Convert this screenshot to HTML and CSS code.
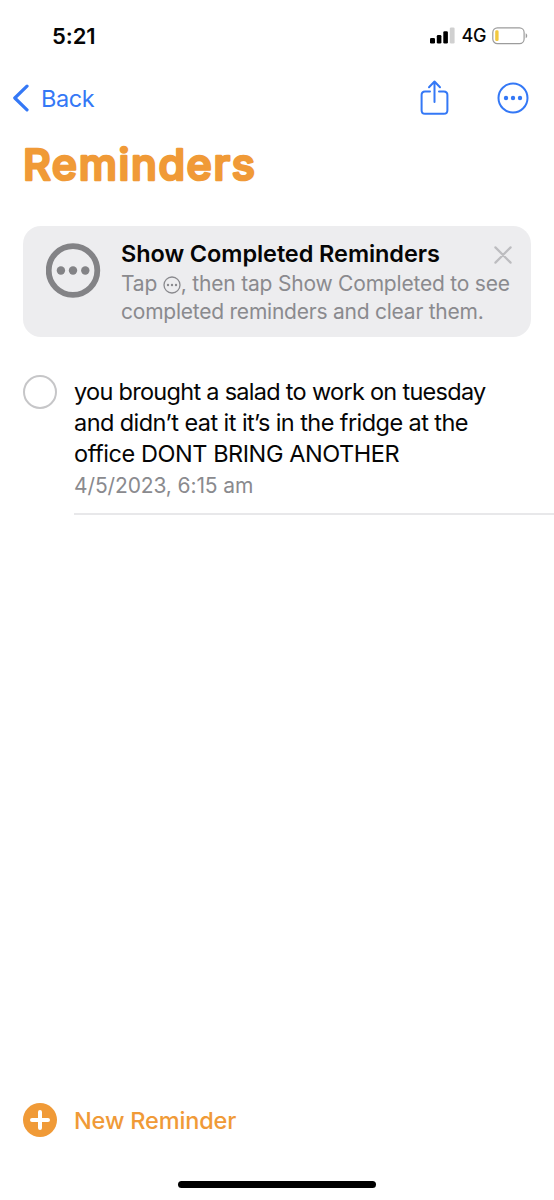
FILE: index.html
```html
<!DOCTYPE html>
<html lang="en">
<head>
<meta charset="utf-8">
<title>Reminders</title>
<link rel="stylesheet" href="styles.css">
</head>
<body>
<div class="screen">
  <header class="status">
    <span class="time">5:21</span>
    <div class="indicators">
      <svg class="signal" width="25" height="17" viewBox="0 0 25 17"><rect x="0" y="11" width="5" height="5.5" rx="1.3"/><rect x="6.8" y="8" width="4.6" height="8.5" rx="1.3"/><rect x="13.3" y="4.3" width="4.6" height="12.2" rx="1.3"/><rect class="faint" x="19.8" y="0.5" width="4.8" height="16" rx="1.3"/></svg>
      <span class="network">4G</span>
      <svg class="battery" width="36" height="18" viewBox="0 0 36 18"><rect x="0.8" y="0.8" width="31.3" height="15.8" rx="4.6" fill="none" stroke="#9c9c9c" stroke-width="1.2"/><rect x="3.2" y="3.3" width="3.4" height="10.8" rx="1.4" fill="#f2c83f"/><path d="M33.7 6.2c2 .8 2 4.3 0 5z" fill="#9c9c9c"/></svg>
    </div>
  </header>
  <nav class="nav">
    <a class="back"><svg width="18" height="28" viewBox="0 0 18 28"><path d="M15 2.2 2.8 14 15 25.8"/></svg><span>Back</span></a>
    <div class="actions">
      <svg class="share" width="29" height="36" viewBox="0 0 29 36"><path d="M10 11.4H5Q1.6 11.4 1.6 15V30.2Q1.6 33.8 5 33.8H23.8Q27.4 33.8 27.4 30.2V15Q27.4 11.4 23.8 11.4H19M14.5 22V1.8M9 7.2l5.5-5.7 5.5 5.7"/></svg>
      <svg class="more" width="32" height="32" viewBox="0 0 32 32"><circle class="ring" cx="16" cy="16" r="14.5"/><circle cx="9" cy="16" r="2.2"/><circle cx="16" cy="16" r="2.2"/><circle cx="23" cy="16" r="2.2"/></svg>
    </div>
  </nav>
  <h1 class="title"><svg width="260" height="56"><text x="0" y="42">Reminders</text></svg></h1>
  <section class="tip">
    <svg class="tip-icon" width="55" height="55" viewBox="0 0 55 55"><circle cx="27" cy="27.5" r="24.3" fill="none" stroke="#838386" stroke-width="5.8"/><g fill="#838386"><circle cx="14.9" cy="27.5" r="4.2"/><circle cx="27" cy="27.5" r="4.2"/><circle cx="39.3" cy="27.5" r="4.2"/></g></svg>
    <div class="tip-body">
      <h2>Show Completed Reminders</h2>
      <p><span class="tip-a">Tap <svg width="18" height="18" viewBox="0 0 18 18"><circle cx="9" cy="9" r="8" fill="none" stroke="#8a8a8e" stroke-width="1.3"/><g fill="#8a8a8e"><circle cx="5" cy="9" r="1.2"/><circle cx="9" cy="9" r="1.2"/><circle cx="13" cy="9" r="1.2"/></g></svg>, then tap Show Completed to see</span><br><span class="tip-b">completed reminders and clear them.</span></p>
    </div>
    <svg class="close" width="18" height="18" viewBox="0 0 18 18"><path d="M1.4 1.4 16.6 16.6M16.6 1.4 1.4 16.6"/></svg>
  </section>
  <main class="item">
    <span class="check"></span>
    <div class="item-body">
      <p class="text"><span class="l1">you brought a salad to work on tuesday</span><br><span class="l2">and didn’t eat it it’s in the fridge at the</span><br><span class="l3">office DONT BRING ANOTHER</span></p>
      <p class="date">4/5/2023, 6:15 am</p>
    </div>
  </main>
  <footer class="footer">
    <svg width="34" height="34" viewBox="0 0 34 34"><circle cx="17" cy="17" r="17" fill="#f09a37"/><path d="M17 9v16M9 17h16" stroke="#fff" stroke-width="4" stroke-linecap="round"/></svg>
    <span class="new">New Reminder</span>
  </footer>
  <div class="home"></div>
</div>
</body>
</html>
```
FILE: styles.css
```css
* { box-sizing: border-box; margin: 0; }
body { background: #fff; font-family: Inter, "Liberation Sans", sans-serif; color: #050505; }
.screen { width: 554px; height: 1200px; display: flex; flex-direction: column; overflow: hidden; }
svg { display: block; flex: none; }
span { white-space: nowrap; }
.status { height: 72px; flex: none; display: flex; justify-content: space-between; padding: 0 26px 1px 52px; align-items: center; }
.time { font-size: 22px; font-weight: 600; letter-spacing: -0.1px; }
.indicators { display: flex; align-items: center; }
.faint { fill: #d0d0d0; }
.network { font-size: 18px; font-weight: 500; margin: 0 6px 0 7px; letter-spacing: -0.4px; }
.nav { height: 52px; flex: none; display: flex; justify-content: space-between; align-items: center; padding: 0 25px 0 12px; color: #3478f6; }
.back { display: flex; align-items: center; gap: 11px; font-size: 23.5px; letter-spacing: -0.4px; }
.back path { fill: none; stroke: #3478f6; stroke-width: 3.2; stroke-linecap: round; stroke-linejoin: round; }
.actions { display: flex; align-items: center; gap: 48px; }
.share { fill: none; stroke: #3478f6; stroke-width: 2; stroke-linecap: round; stroke-linejoin: round; }
.more { fill: #3478f6; }
.ring { fill: none; stroke: #3478f6; stroke-width: 2; }
.title { height: 102px; flex: none; padding: 14px 0 0 23px; }
.title text { font-size: 43px; font-weight: 500; letter-spacing: 1.6px; fill: #f09a37; stroke: #f09a37; stroke-width: 2.6; stroke-linejoin: round; }
.tip { height: 111px; flex: none; margin: 0 23px; border-radius: 18px; background: #ededef; display: flex; align-items: flex-start; padding: 0 19px 0 23px; }
.tip-icon { margin-top: 17px; }
.tip-body { margin: 12px 0 0 20px; width: 373px; }
h2 { font-size: 23.5px; line-height: 32px; font-weight: 600; letter-spacing: -0.08px; white-space: nowrap; }
.tip p { font-size: 21px; line-height: 28.4px; color: #8a8a8e; }
.tip-a { letter-spacing: -0.2px; }
.tip-b { letter-spacing: -0.23px; }
.tip p svg { display: inline-block; vertical-align: -3px; }
.close { margin-top: 20px; fill: none; stroke: #bdbdc0; stroke-width: 2.2; stroke-linecap: round; }
.item { margin: 38px 0 0 23px; display: flex; gap: 17px; flex: none; }
.check { width: 34px; height: 34px; border: 2px solid #c6c6c8; border-radius: 50%; flex: none; }
.item-body { flex: 1; height: 140px; padding-top: 1px; border-bottom: 2px solid #e8e8ea; }
.text { font-size: 23.5px; line-height: 31px; }
.l1 { letter-spacing: -0.71px; }
.l2 { letter-spacing: -0.57px; }
.l3 { letter-spacing: -0.44px; }
.date { font-size: 21px; line-height: 34px; letter-spacing: -0.12px; color: #8a8a8e; }
.footer { margin-top: auto; flex: none; padding-left: 23px; display: flex; align-items: center; gap: 17px; height: 34px; }
.new { font-size: 23.5px; font-weight: 500; letter-spacing: -0.15px; padding-top: 1px; color: #f09a37; }
.home { flex: none; width: 198px; height: 7px; border-radius: 4px; background: #000; margin: 44px 0 12px 178px; }
```
